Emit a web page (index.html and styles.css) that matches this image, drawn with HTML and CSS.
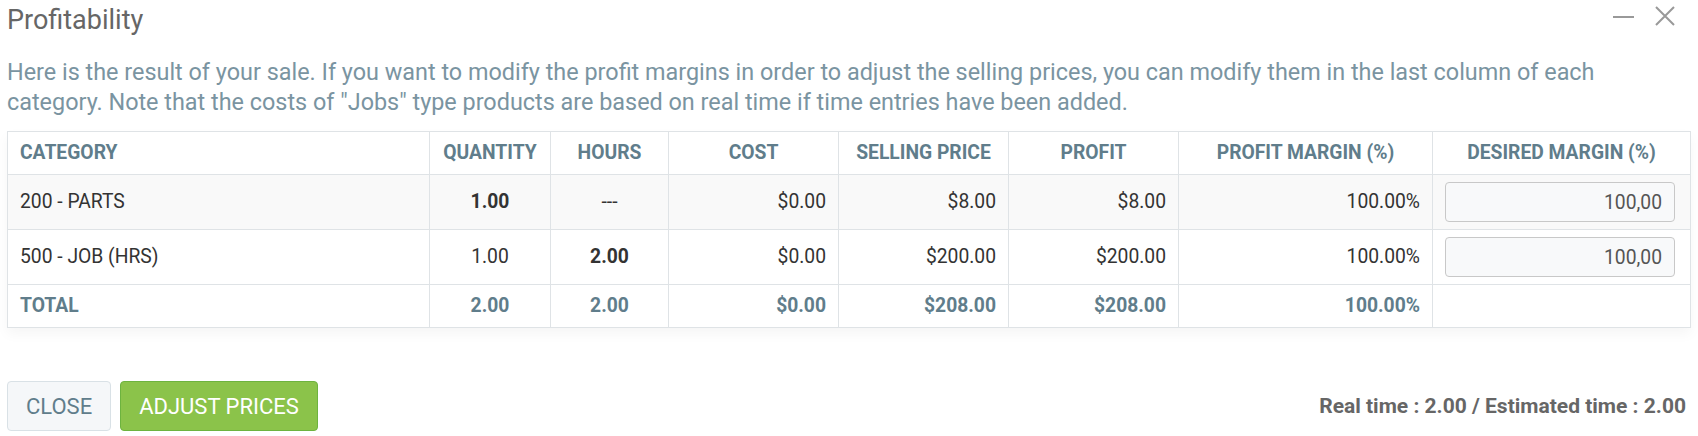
FILE: index.html
```html
<!DOCTYPE html>
<html lang="en">
<head>
    <meta charset="UTF-8">
    <meta name="viewport" content="width=device-width, initial-scale=1.0">
    <title>Profitability</title>
    <link rel="stylesheet" href="styles.css">
</head>
<body>

    <div class="modal">
        <div class="modal-header">
            <h2>Profitability</h2>
            <div class="modal-tools">
                <button class="tool" title="Minimize">
                    <svg width="22" height="22" viewBox="0 0 22 22"><line x1="1" y1="12" x2="22" y2="12" stroke="#999" stroke-width="2"/></svg>
                </button>
                <button class="tool" title="Close">
                    <svg width="20" height="20" viewBox="0 0 20 20"><path d="M1 1 L19 19 M19 1 L1 19" stroke="#999" stroke-width="2" fill="none"/></svg>
                </button>
            </div>
        </div>

        <p class="intro">Here is the result of your sale. If you want to modify the profit margins in order to adjust the selling prices, you can modify them in the last column of each category. Note that the costs of "Jobs" type products are based on real time if time entries have been added.</p>

        <table class="profit-table">
            <colgroup>
                <col style="width: 422px">
                <col style="width: 121px">
                <col style="width: 118px">
                <col style="width: 170px">
                <col style="width: 170px">
                <col style="width: 170px">
                <col style="width: 254px">
                <col style="width: 258px">
            </colgroup>
            <thead>
                <tr>
                    <th class="left">Category</th>
                    <th>Quantity</th>
                    <th>Hours</th>
                    <th>Cost</th>
                    <th>Selling price</th>
                    <th>Profit</th>
                    <th>Profit margin (%)</th>
                    <th>Desired margin (%)</th>
                </tr>
            </thead>
            <tbody>
                <tr class="striped">
                    <td>200 - PARTS</td>
                    <td class="center strong">1.00</td>
                    <td class="center">---</td>
                    <td class="right">$0.00</td>
                    <td class="right">$8.00</td>
                    <td class="right">$8.00</td>
                    <td class="right">100.00%</td>
                    <td class="margin-cell"><input type="text" class="margin-input" value="100,00"></td>
                </tr>
                <tr>
                    <td>500 - JOB (HRS)</td>
                    <td class="center">1.00</td>
                    <td class="center strong">2.00</td>
                    <td class="right">$0.00</td>
                    <td class="right">$200.00</td>
                    <td class="right">$200.00</td>
                    <td class="right">100.00%</td>
                    <td class="margin-cell"><input type="text" class="margin-input" value="100,00"></td>
                </tr>
            </tbody>
            <tfoot>
                <tr>
                    <td>TOTAL</td>
                    <td class="center">2.00</td>
                    <td class="center">2.00</td>
                    <td class="right">$0.00</td>
                    <td class="right">$208.00</td>
                    <td class="right">$208.00</td>
                    <td class="right">100.00%</td>
                    <td></td>
                </tr>
            </tfoot>
        </table>

        <div class="modal-footer">
            <div class="actions">
                <button class="btn btn-light">Close</button>
                <button class="btn btn-green">Adjust prices</button>
            </div>
            <div class="time-summary">Real time : 2.00 / Estimated time : 2.00</div>
        </div>
    </div>

</body>
</html>
```

FILE: styles.css
```css
body {
    font-family: Roboto, 'Liberation Sans', sans-serif;
    margin: 0;
    padding: 0 8px 0 7px;
    background: #fff;
    color: #333;
}
.modal-header {
    display: flex;
    justify-content: space-between;
    align-items: center;
    height: 30px;
    margin-top: 5px;
}
.modal-header h2 {
    margin: 0;
    font-size: 27px;
    font-weight: 400;
    line-height: 30px;
    color: #666;
}
.modal-tools {
    display: flex;
    align-items: center;
    gap: 21px;
    margin-right: 15px;
    margin-top: -9px;
}
.tool {
    background: none;
    border: none;
    padding: 0;
    cursor: pointer;
    display: flex;
}
.intro {
    margin: 22px 0 14px;
    font-size: 23.4px;
    font-weight: 400;
    line-height: 30px;
    color: #7a94a1;
}
.profit-table {
    width: 1683px;
    border-collapse: collapse;
    table-layout: fixed;
    border: 1px solid #dfe6ea;
    box-shadow: 0 6px 12px rgba(0, 0, 0, 0.04);
    font-size: 19.3px;
}
.profit-table th,
.profit-table td {
    border: 1px solid #dfe3e6;
    padding: 8px 12px;
    line-height: 26px;
}
.profit-table th {
    text-transform: uppercase;
    font-weight: 700;
    color: #607d8b;
    text-align: center;
}
.profit-table th.left {
    text-align: left;
}
.profit-table tbody td {
    padding-top: 7px;
    padding-bottom: 7px;
}
.profit-table tr.striped td {
    background: #f9f9f9;
}
.profit-table tfoot td {
    font-weight: 700;
    color: #607d8b;
}
.center {
    text-align: center;
}
.right {
    text-align: right;
}
.strong {
    font-weight: 700;
}
.profit-table td.margin-cell {
    padding-right: 15px;
}
.margin-input {
    box-sizing: border-box;
    display: block;
    width: 100%;
    height: 40px;
    padding: 0 12px;
    border: 1px solid #c8c8c8;
    border-radius: 4px;
    background: #f8f9fa;
    font-family: inherit;
    font-size: 19.3px;
    color: #555;
    text-align: right;
}
.modal-footer {
    display: flex;
    justify-content: space-between;
    align-items: center;
    margin-top: 53px;
}
.actions {
    display: flex;
    gap: 9px;
}
.btn {
    height: 50px;
    padding: 0 18px;
    border-radius: 4px;
    font-family: inherit;
    font-size: 22px;
    text-transform: uppercase;
    cursor: pointer;
}
.btn-light {
    background: #f5f7f9;
    border: 1px solid #d9e1e6;
    color: #607d8b;
}
.btn-green {
    background: #8bc34a;
    border: 1px solid #6db33f;
    color: #fff;
}
.btn-green:hover {
    background: #7cb342;
}
.time-summary {
    font-size: 21px;
    font-weight: 700;
    color: #666;
    margin-right: 4px;
}
```
